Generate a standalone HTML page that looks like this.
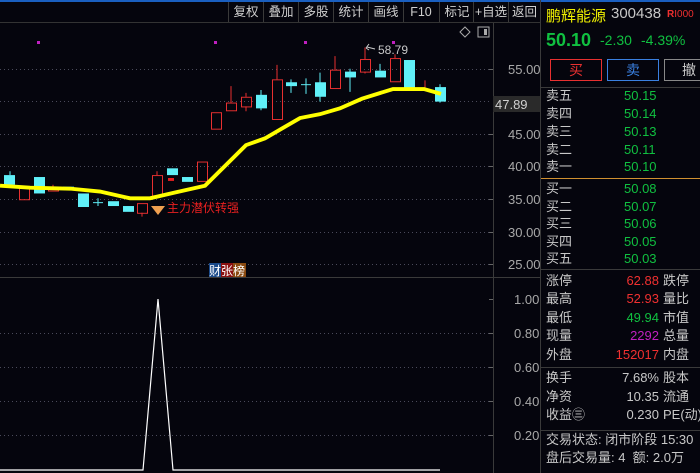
<!DOCTYPE html>
<html><head><meta charset="utf-8"><style>
*{margin:0;padding:0;box-sizing:border-box}
body{width:700px;height:473px;background:#05050d;overflow:hidden;position:relative;font-family:"Liberation Sans","Noto Sans CJK SC",sans-serif;color:#c8c8c8}
.a{position:absolute;white-space:nowrap}
.tb{position:absolute;top:2px;height:20px;width:35px;border-left:1px solid #3a3a3a;font-size:12.5px;color:#d0d0d0;text-align:center;line-height:20px}
.row{position:absolute;left:546px;width:154px;height:18px;font-size:13px;line-height:18px}
.row .l{position:absolute;left:0;color:#c8c8c8}
.row .v{position:absolute;right:41px;color:#10c040}
.row .r{position:absolute;left:117px;color:#c8c8c8}
.hl{position:absolute;left:541px;width:159px;height:1px;background:#3a3a3a}
</style></head><body>
<div class="a" style="left:0;top:0;width:700px;height:2px;background:#1a5fc0"></div>
<div class="a" style="left:0;top:22px;width:540px;height:1px;background:#333"></div>
<div class="tb" style="left:228px">复权</div>
<div class="tb" style="left:263px">叠加</div>
<div class="tb" style="left:298px">多股</div>
<div class="tb" style="left:333px">统计</div>
<div class="tb" style="left:368px">画线</div>
<div class="tb" style="left:403px">F10</div>
<div class="tb" style="left:439px">标记</div>
<div class="tb" style="left:473px">+自选</div>
<div class="tb" style="left:508px;width:32px">返回</div>
<div class="a" style="left:540px;top:0;width:1px;height:473px;background:#3a3a3a"></div>

<svg class="a" style="left:0;top:0" width="540" height="473">
<g stroke="#4a4a5a" stroke-dasharray="1,3" stroke-width="1">
<line x1="0" y1="69.5" x2="490" y2="69.5"/><line x1="0" y1="101.5" x2="490" y2="101.5"/><line x1="0" y1="134.5" x2="490" y2="134.5"/><line x1="0" y1="166.5" x2="490" y2="166.5"/><line x1="0" y1="199.5" x2="490" y2="199.5"/><line x1="0" y1="232.5" x2="490" y2="232.5"/><line x1="0" y1="264.5" x2="490" y2="264.5"/>
<line x1="0" y1="333.5" x2="490" y2="333.5"/><line x1="0" y1="367.5" x2="490" y2="367.5"/><line x1="0" y1="401.5" x2="490" y2="401.5"/><line x1="0" y1="435.5" x2="490" y2="435.5"/>
</g>
<line x1="493.5" y1="23" x2="493.5" y2="473" stroke="#3a3a3a"/>
<line x1="0" y1="277.5" x2="540" y2="277.5" stroke="#3a3a3a"/>
<g stroke="#666"><line x1="489" y1="69.5" x2="493" y2="69.5"/><line x1="489" y1="134.5" x2="493" y2="134.5"/><line x1="489" y1="166.5" x2="493" y2="166.5"/><line x1="489" y1="199.5" x2="493" y2="199.5"/><line x1="489" y1="232.5" x2="493" y2="232.5"/><line x1="489" y1="264.5" x2="493" y2="264.5"/><line x1="489" y1="299.5" x2="493" y2="299.5"/><line x1="489" y1="333.5" x2="493" y2="333.5"/><line x1="489" y1="367.5" x2="493" y2="367.5"/><line x1="489" y1="401.5" x2="493" y2="401.5"/><line x1="489" y1="435.5" x2="493" y2="435.5"/></g>
<g font-size="13" fill="#a8a8a8" font-family="Liberation Sans">
<text x="508" y="74">55.00</text><text x="508" y="139">45.00</text><text x="508" y="171">40.00</text><text x="508" y="204">35.00</text><text x="508" y="237">30.00</text><text x="508" y="269">25.00</text>
<text x="514" y="304">1.00</text><text x="514" y="338">0.80</text><text x="514" y="372">0.60</text><text x="514" y="406">0.40</text><text x="514" y="440">0.20</text>
</g>
<rect x="493" y="96" width="47" height="16" fill="#2a2a2a"/>
<text x="495" y="109" font-size="13" fill="#d0d0d0">47.89</text>
<g fill="#c020c0"><rect x="37" y="41" width="3" height="3"/><rect x="214" y="41" width="3" height="3"/><rect x="304" y="41" width="3" height="3"/><rect x="392" y="41" width="3" height="3"/></g>
<path d="M460 32 l5 -5 l5 5 l-5 5z" fill="none" stroke="#aaa"/>
<rect x="478" y="27" width="11" height="10" fill="none" stroke="#aaa"/><rect x="484" y="29" width="3" height="6" fill="#aaa"/>
<path d="M366 48 l3 -4 M366 48 l3 2 M367 47 l8 2" stroke="#ccc" fill="none"/>
<text x="378" y="54" font-size="12" fill="#c8c8c8">58.79</text>
<g transform="translate(0,2) scale(1,0.967)">
<g stroke="#e83030" fill="none" stroke-width="1">
<rect x="19.5" y="191.5" width="10" height="13"/><line x1="53" y1="189" x2="53" y2="192"/><rect x="48.5" y="192.5" width="10" height="3"/>
<rect x="137.5" y="208.5" width="10" height="10"/><line x1="142" y1="218" x2="142" y2="222"/>
<rect x="152.5" y="179.5" width="10" height="21"/><line x1="157" y1="175" x2="157" y2="179"/>
<rect x="197.5" y="165.5" width="10" height="20"/>
<rect x="211.5" y="114.5" width="10" height="17"/>
<rect x="226.5" y="104.5" width="10" height="8"/><line x1="231" y1="87" x2="231" y2="104"/>
<rect x="241.5" y="98.5" width="10" height="10"/><line x1="246" y1="94" x2="246" y2="98"/><line x1="246" y1="108" x2="246" y2="113"/>
<rect x="272.5" y="80.5" width="10" height="41"/><line x1="277" y1="65" x2="277" y2="80"/>
<rect x="330.5" y="70.5" width="10" height="19"/><line x1="335" y1="56" x2="335" y2="70"/>
<rect x="360.5" y="59.5" width="10" height="13"/><line x1="365" y1="47" x2="365" y2="59"/><line x1="365" y1="72" x2="365" y2="74"/>
<rect x="390.5" y="58.5" width="10" height="24"/><line x1="395" y1="54" x2="395" y2="58"/>
<line x1="425" y1="81" x2="425" y2="90"/><line x1="420" y1="90.5" x2="430" y2="90.5"/>
</g>
<rect x="168" y="182" width="6" height="3" fill="#e82020"/>
<g fill="#60f0f8" stroke="#60f0f8">
<rect x="4.5" y="179.5" width="10" height="9"/><line x1="10" y1="175" x2="10" y2="179"/>
<rect x="34.5" y="181.5" width="10" height="16"/>
<rect x="63.5" y="191.5" width="10" height="2"/>
<rect x="78.5" y="198.5" width="10" height="13"/>
<line x1="93" y1="207.5" x2="103" y2="207.5"/><line x1="98" y1="203" x2="98" y2="211"/>
<rect x="108.5" y="206.5" width="10" height="4"/>
<rect x="123.5" y="211.5" width="10" height="5"/>
<rect x="167.5" y="172.5" width="10" height="6"/>
<rect x="182.5" y="181.5" width="10" height="4"/>
<rect x="256.5" y="96.5" width="10" height="13"/><line x1="261" y1="91" x2="261" y2="112"/>
<rect x="286.5" y="83.5" width="10" height="3"/><line x1="291" y1="80" x2="291" y2="94"/>
<line x1="301" y1="85.5" x2="311" y2="85.5"/><line x1="306" y1="79" x2="306" y2="95"/>
<rect x="315.5" y="83.5" width="10" height="14"/><line x1="320" y1="73" x2="320" y2="103"/>
<rect x="345.5" y="72.5" width="10" height="5"/><line x1="350" y1="69" x2="350" y2="93"/>
<rect x="375.5" y="71.5" width="10" height="6"/><line x1="380" y1="64" x2="380" y2="71"/>
<rect x="404.5" y="60.5" width="10" height="30"/>
<rect x="435.5" y="88.5" width="10" height="14"/><line x1="440" y1="85" x2="440" y2="104"/>
</g>
<polyline points="0,190 30,192 70,193 100,196 130,203 150,203 175,197 205,190 246,148 265,141 300,120 320,116 340,110 362,100 393,90 424,90 441,95" fill="none" stroke="#ffff00" stroke-width="4"/>
</g>
<path d="M151 206 h14 l-7 9z" fill="#f0a050"/>
<text x="167" y="212" font-size="12" fill="#e82020" font-family="Liberation Sans,Noto Sans CJK SC,sans-serif">主力潜伏转强</text>
<rect x="209" y="263" width="12" height="14" fill="#1a4a8a"/><rect x="221" y="263" width="12" height="14" fill="#8a1010"/><rect x="233" y="263" width="13" height="14" fill="#8a4a10"/>
<text x="209" y="275" font-size="12" fill="#fff" font-family="Noto Sans CJK SC,sans-serif">财张榜</text>
<polyline points="0,470 143,470 158,299 173,470 440,470" fill="none" stroke="#fff" stroke-width="1.2"/>
</svg>

<div class="a" style="left:546px;top:5px;font-size:15px;color:#f0f000">鹏辉能源</div>
<div class="a" style="left:611px;top:5px;font-size:15px;color:#c8c8c8">300438</div>
<div class="a" style="left:667px;top:9px;font-size:10px;color:#f03030"><b>R</b>I000</div>
<div class="a" style="left:546px;top:30px;font-size:18px;font-weight:bold;color:#10c040">50.10</div>
<div class="a" style="left:600px;top:32px;font-size:14px;color:#10c040">-2.30</div>
<div class="a" style="left:641px;top:32px;font-size:14px;color:#10c040">-4.39%</div>
<div class="a" style="left:550px;top:59px;width:52px;height:22px;border:1px solid #e83030;color:#e83030;font-size:14px;text-align:center;line-height:20px">买</div>
<div class="a" style="left:607px;top:59px;width:52px;height:22px;border:1px solid #3a80e0;color:#3a80e0;font-size:14px;text-align:center;line-height:20px">卖</div>
<div class="a" style="left:664px;top:59px;width:50px;height:22px;border:1px solid #888;color:#ccc;font-size:14px;text-align:center;line-height:20px">撤</div>
<div class="hl" style="top:87px"></div>
<div class="row" style="top:87px"><span class="l">卖五</span><span class="v" style="left:78px;right:auto">50.15</span></div>
<div class="row" style="top:105px"><span class="l">卖四</span><span class="v" style="left:78px;right:auto">50.14</span></div>
<div class="row" style="top:123px"><span class="l">卖三</span><span class="v" style="left:78px;right:auto">50.13</span></div>
<div class="row" style="top:141px"><span class="l">卖二</span><span class="v" style="left:78px;right:auto">50.11</span></div>
<div class="row" style="top:158px"><span class="l">卖一</span><span class="v" style="left:78px;right:auto">50.10</span></div>
<div class="hl" style="top:178px;background:#d09030"></div>
<div class="row" style="top:180px"><span class="l">买一</span><span class="v" style="left:78px;right:auto">50.08</span></div>
<div class="row" style="top:198px"><span class="l">买二</span><span class="v" style="left:78px;right:auto">50.07</span></div>
<div class="row" style="top:215px"><span class="l">买三</span><span class="v" style="left:78px;right:auto">50.06</span></div>
<div class="row" style="top:233px"><span class="l">买四</span><span class="v" style="left:78px;right:auto">50.05</span></div>
<div class="row" style="top:250px"><span class="l">买五</span><span class="v" style="left:78px;right:auto">50.03</span></div>
<div class="hl" style="top:269px"></div>
<div class="row" style="top:272px"><span class="l">涨停</span><span class="v" style="color:#f03030">62.88</span><span class="r">跌停</span></div>
<div class="row" style="top:290px"><span class="l">最高</span><span class="v" style="color:#f03030">52.93</span><span class="r">量比</span></div>
<div class="row" style="top:309px"><span class="l">最低</span><span class="v">49.94</span><span class="r">市值</span></div>
<div class="row" style="top:327px"><span class="l">现量</span><span class="v" style="color:#c020c0">2292</span><span class="r">总量</span></div>
<div class="row" style="top:346px"><span class="l">外盘</span><span class="v" style="color:#f03030">152017</span><span class="r">内盘</span></div>
<div class="hl" style="top:367px"></div>
<div class="row" style="top:369px"><span class="l">换手</span><span class="v" style="color:#c8c8c8">7.68%</span><span class="r">股本</span></div>
<div class="row" style="top:388px"><span class="l">净资</span><span class="v" style="color:#c8c8c8">10.35</span><span class="r">流通</span></div>
<div class="row" style="top:406px"><span class="l">收益㊂</span><span class="v" style="color:#c8c8c8">0.230</span><span class="r">PE(动)</span></div>
<div class="hl" style="top:430px"></div>
<div class="row" style="top:431px"><span class="l">交易状态: 闭市阶段 15:30</span></div>
<div class="row" style="top:449px"><span class="l">盘后交易量: 4&nbsp; 额: 2.0万</span></div>
</body></html>
